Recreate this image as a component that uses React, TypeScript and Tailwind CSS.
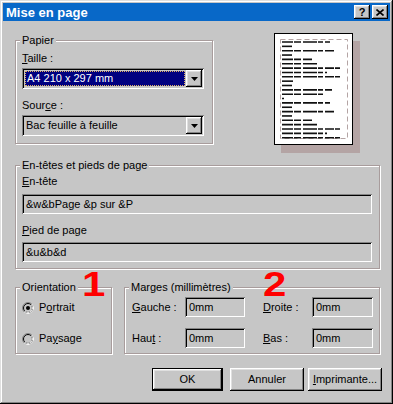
import React from "react";

const RAISED =
  "shadow-[inset_-1px_-1px_0_#000,inset_1px_1px_0_#fff,inset_-2px_-2px_0_#848484,inset_2px_2px_0_#dfdfdf]";
const SUNKEN =
  "shadow-[inset_1px_1px_0_#848484,inset_-1px_-1px_0_#fff,inset_2px_2px_0_#000,inset_-2px_-2px_0_#c6c6c6]";

function Group({
  label,
  className,
  children,
}: {
  label: React.ReactNode;
  className: string;
  children?: React.ReactNode;
}) {
  return (
    <div
      className={
        "relative shrink-0 border border-[#a89c9c] shadow-[inset_1px_1px_0_#fff,1px_1px_0_#fff] " +
        className
      }
    >
      <span className="absolute left-[4px] top-[-7px] bg-[#c6c6c6] px-[2px] leading-[13px] whitespace-nowrap">
        {label}
      </span>
      {children}
    </div>
  );
}

function U({ children }: { children: React.ReactNode }) {
  return <span className="underline underline-offset-[1px]">{children}</span>;
}

function DropBtn() {
  return (
    <div className={"flex h-[17px] w-[16px] shrink-0 items-center justify-center bg-[#c6c6c6] " + RAISED}>
      <svg width="7" height="4" viewBox="0 0 7 4">
        <path d="M0 0H7L3.5 4Z" fill="#000" />
      </svg>
    </div>
  );
}

function Radio({ checked }: { checked?: boolean }) {
  return (
    <svg width="12" height="12" viewBox="0 0 12 12" className="shrink-0">
      <circle cx="6" cy="6" r="5.5" fill="#c6c6c6" stroke="#848484" />
      <path d="M9.89 2.11A5.5 5.5 0 0 1 2.11 9.89" fill="none" stroke="#fff" />
      <circle cx="6" cy="6" r="4.5" fill="#c6c6c6" stroke="#000" />
      <path d="M9.18 2.82A4.5 4.5 0 0 1 2.82 9.18" fill="none" stroke="#dfdfdf" />
      {checked && <circle cx="6" cy="6" r="2" fill="#000" />}
    </svg>
  );
}

function SmallBox({ w }: { w: string }) {
  return (
    <div className={"flex h-[20px] items-center pl-[4px] bg-[#c6c6c6] " + w + " " + SUNKEN}>0mm</div>
  );
}

const lines = [48, 10, 53, 10, 30, 35, 58, 45, 58, 12, 10, 50, 43, 2, 48, 10, 53, 10, 30, 35, 58, 45, 58];

function Preview() {
  return (
    <div className="ml-[61px] h-[112px] w-[79px] shrink-0 border border-black bg-white shadow-[7px_8px_0_#b4a4a4]">
      <svg width="77" height="110" viewBox="0 0 77 110">
        <rect x="5.5" y="5.5" width="67" height="99" fill="none" stroke="#b4a4a4" strokeDasharray="5 3" />
        {lines.map((w, i) => (
          <line
            key={i}
            x1="7"
            x2={7 + w}
            y1={8 + i * 4.35}
            y2={8 + i * 4.35}
            stroke="#111"
            strokeWidth="1.6"
            strokeDasharray="11 1 7 2 14 1 5 2 9 1"
          />
        ))}
      </svg>
    </div>
  );
}

function Button({ children, def, w }: { children: React.ReactNode; def?: boolean; w: string }) {
  return (
    <div
      className={
        "flex h-[23px] shrink-0 items-center justify-center bg-[#c6c6c6] " +
        w +
        " " +
        RAISED +
        (def ? " border border-black" : "")
      }
    >
      {children}
    </div>
  );
}

export default function App() {
  return (
    <div className="relative h-[404px] w-[393px] bg-[#c6c6c6] p-[3px] font-['Liberation_Sans',Arial,sans-serif] text-[11px] leading-[13px] text-black shadow-[inset_-1px_-1px_0_#000,inset_1px_1px_0_#dfdfdf,inset_-2px_-2px_0_#848484,inset_2px_2px_0_#fff]">
      {/* Title bar */}
      <div className="flex h-[18px] items-center justify-between bg-[#0868c8] pl-[3px] pr-[2px]">
        <span className="text-[13px] font-bold leading-none text-white">Mise en page</span>
        <div className="flex gap-[2px]">
          <div className={"flex h-[14px] w-[16px] items-center justify-center bg-[#c6c6c6] text-[11px] font-bold leading-none " + RAISED}>
            ?
          </div>
          <div className={"flex h-[14px] w-[16px] items-center justify-center bg-[#c6c6c6] " + RAISED}>
            <svg width="8" height="7" viewBox="0 0 8 7">
              <path d="M0.5 0.5L7.5 6.5M7.5 0.5L0.5 6.5" stroke="#000" strokeWidth="1.6" />
            </svg>
          </div>
        </div>
      </div>

      {/* Body */}
      <div className="flex flex-col pl-[12px]">
        {/* Row 1 */}
        <div className="mt-[12px] flex items-start">
          <Group label="Papier" className="mt-[7px] h-[104px] w-[198px] pl-[6px] pt-[11px]">
            <div>
              <U>T</U>aille :
            </div>
            <div className={"mt-[3px] flex h-[21px] w-[182px] items-center p-[2px] bg-[#c6c6c6] " + SUNKEN}>
              <div className="ml-[1px] mr-[1px] flex h-[15px] flex-1 items-center border border-dotted border-[#e0b060] bg-[#000080] pl-[1px] text-white">
                A4 210 x 297 mm
              </div>
              <DropBtn />
            </div>
            <div className="mt-[10px]">
              Sour<U>c</U>e :
            </div>
            <div className={"mt-[3px] flex h-[21px] w-[182px] items-center p-[2px] bg-[#c6c6c6] " + SUNKEN}>
              <div className="flex-1 pl-[2px]">Bac feuille à feuille</div>
              <DropBtn />
            </div>
          </Group>
          <Preview />
        </div>

        {/* Row 2 */}
        <Group label="En-têtes et pieds de page" className="mt-[20px] h-[104px] w-[365px] pl-[6px] pt-[9px]">
          <div>
            <U>E</U>n-tête
          </div>
          <div className={"mt-[6px] flex h-[20px] w-[350px] items-center pl-[4px] bg-[#c6c6c6] " + SUNKEN}>
            &amp;w&amp;bPage &amp;p sur &amp;P
          </div>
          <div className="mt-[10px]">
            <U>P</U>ied de page
          </div>
          <div className={"mt-[5px] flex h-[20px] w-[350px] items-center pl-[4px] bg-[#c6c6c6] " + SUNKEN}>
            &amp;u&amp;b&amp;d
          </div>
        </Group>

        {/* Row 3 */}
        <div className="mt-[18px] flex">
          <Group label="Orientation" className="h-[67px] w-[97px] pl-[6px] pt-[13px]">
            <div className="flex flex-col gap-[18px]">
              <div className="flex items-center gap-[5px]">
                <Radio checked />
                <span>
                  P<U>o</U>rtrait
                </span>
              </div>
              <div className="flex items-center gap-[5px]">
                <Radio />
                <span>
                  Pa<U>y</U>sage
                </span>
              </div>
            </div>
          </Group>
          <Group label="Marges (millimètres)" className="ml-[12px] h-[67px] w-[256px] pl-[7px] pt-[9px]">
            <div className="flex flex-col gap-[11px]">
              <div className="flex items-center">
                <span className="w-[53px]">
                  <U>G</U>auche :
                </span>
                <SmallBox w="w-[60px]" />
                <span className="ml-[18px] w-[49px]">
                  <U>D</U>roite :
                </span>
                <SmallBox w="w-[61px]" />
              </div>
              <div className="flex items-center">
                <span className="w-[53px]">
                  Hau<U>t</U> :
                </span>
                <SmallBox w="w-[60px]" />
                <span className="ml-[18px] w-[49px]">
                  <U>B</U>as :
                </span>
                <SmallBox w="w-[61px]" />
              </div>
            </div>
          </Group>
        </div>

        {/* Row 4 */}
        <div className="mt-[14px] flex justify-end pr-[8px]">
          <Button def w="w-[71px]">
            OK
          </Button>
          <div className="w-[7px]" />
          <Button w="w-[74px]">Annuler</Button>
          <div className="w-[4px]" />
          <Button w="w-[74px]">
            <span>
              <U>I</U>mprimante...
            </span>
          </Button>
        </div>
      </div>

      {/* Red annotations */}
      <span className="absolute left-[82px] top-[270px] origin-left scale-x-[1.2] text-[35px] font-black leading-[27px] text-[#ff0000]">
        1
      </span>
      <span className="absolute left-[263px] top-[270px] origin-left scale-x-[1.2] text-[35px] font-black leading-[27px] text-[#ff0000]">
        2
      </span>
    </div>
  );
}
